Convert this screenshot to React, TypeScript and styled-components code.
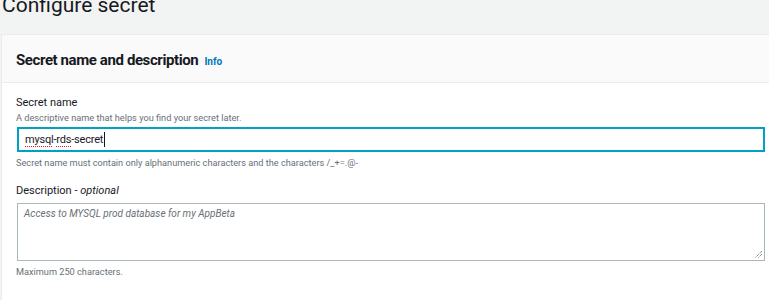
import React from 'react'
import styled, { createGlobalStyle } from 'styled-components'

const GlobalStyle = createGlobalStyle`
  html, body {
    margin: 0;
    padding: 0;
    background: #f2f3f3;
    font-family: Roboto, "Liberation Sans", Arial, sans-serif;
    color: #16191f;
    overflow: hidden;
  }
`

const Page = styled.div`
  width: 769px;
  height: 300px;
  overflow: hidden;
`

const Title = styled.h1`
  margin: -9px 0 0 2px;
  font-size: 21px;
  font-weight: 400;
  line-height: 28px;
  color: #16191f;
`

const Card = styled.section`
  margin: 15px -20px 0 1px;
  background: #fff;
  border: 1px solid #eaeded;
  border-right: none;
  min-height: 300px;
`

const CardHeader = styled.header`
  display: flex;
  align-items: baseline;
  gap: 6px;
  height: 48px;
  box-sizing: border-box;
  padding: 16px 14px 0;
  background: #fafafa;
  border-bottom: 1px solid #eaeded;
`

const HeaderTitle = styled.h2`
  margin: 0;
  font-size: 15px;
  font-weight: 700;
  letter-spacing: -0.4px;
`

const InfoLink = styled.a`
  font-size: 10px;
  font-weight: 700;
  color: #0073bb;
  text-decoration: none;
`

const CardBody = styled.div`
  padding: 12px 15px 0 14px;
  width: 749px;
`

const Field = styled.div<{ gap?: number }>`
  display: flex;
  flex-direction: column;
  margin-bottom: ${(p) => p.gap ?? 0}px;
`

const Label = styled.label`
  font-size: 11px;
  line-height: 16px;
  color: #16191f;

  em {
    font-style: italic;
  }
`

const Hint = styled.span`
  font-size: 9.2px;
  line-height: 13px;
  color: #687078;
`

const TextInput = styled.div`
  box-sizing: border-box;
  height: 25px;
  margin: 3px 0 4px 1px;
  padding: 0 6px;
  display: flex;
  align-items: center;
  border: 2px solid #00a1c9;
  font-size: 11px;
  letter-spacing: -0.2px;
  color: #16191f;
`

const Misspelled = styled.span`
  text-decoration: underline dotted #e02020;
  text-decoration-thickness: 1px;
  text-underline-offset: 3px;
  text-decoration-skip-ink: none;
`

const Caret = styled.span`
  display: inline-block;
  width: 1px;
  height: 15px;
  margin-left: 1px;
  background: #16191f;
  vertical-align: middle;
`

const TextArea = styled.div`
  position: relative;
  box-sizing: border-box;
  height: 58px;
  margin: 4px 0 4px 1px;
  padding: 4px 6px;
  border: 1px solid #aab7b8;
  font-size: 10px;
  font-style: italic;
  color: #687078;
`

const Grip = styled.svg`
  position: absolute;
  right: 1px;
  bottom: 1px;
`

const App = () => {
  return (
    <Page>
      <GlobalStyle />
      <Title>Configure secret</Title>
      <Card>
        <CardHeader>
          <HeaderTitle>Secret name and description</HeaderTitle>
          <InfoLink href="#">Info</InfoLink>
        </CardHeader>
        <CardBody>
          <Field gap={14}>
            <Label>Secret name</Label>
            <Hint>A descriptive name that helps you find your secret later.</Hint>
            <TextInput>
              <span>
                <Misspelled>mysql</Misspelled>-<Misspelled>rds</Misspelled>-secret
              </span>
              <Caret />
            </TextInput>
            <Hint>Secret name must contain only alphanumeric characters and the characters /_+=.@-</Hint>
          </Field>
          <Field>
            <Label>
              Description - <em>optional</em>
            </Label>
            <TextArea>
              Access to MYSQL prod database for my AppBeta
              <Grip width="9" height="9" viewBox="0 0 9 9">
                <path d="M8 1 L1 8 M8 4 L4 8" stroke="#555" strokeWidth="1" strokeDasharray="1 1" />
              </Grip>
            </TextArea>
            <Hint>Maximum 250 characters.</Hint>
          </Field>
        </CardBody>
      </Card>
    </Page>
  )
}

export default App
